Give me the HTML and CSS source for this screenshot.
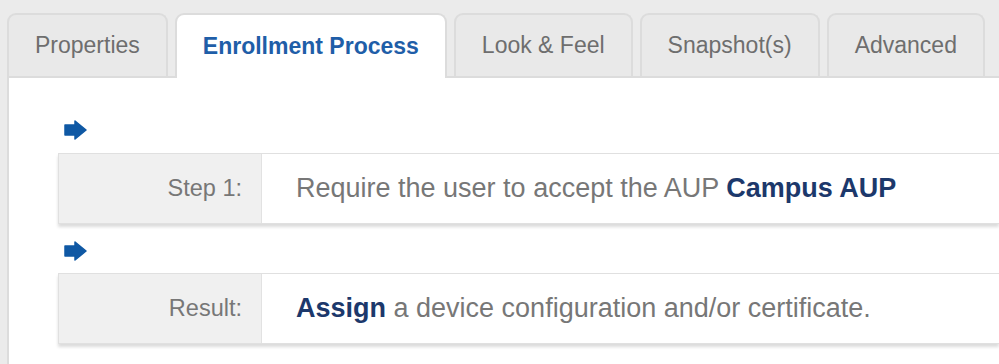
FILE: index.html
```html
<!DOCTYPE html>
<html>
<head>
  <meta charset="utf-8">
  <title>Enrollment Process</title>
  <link rel="stylesheet" href="styles.css">
</head>
<body>
  <div class="tabs">
    <div class="tab">Properties</div>
    <div class="tab active">Enrollment Process</div>
    <div class="tab">Look &amp; Feel</div>
    <div class="tab">Snapshot(s)</div>
    <div class="tab">Advanced</div>
  </div>

  <div class="panel">
    <div class="steps">
      <svg class="arrow" width="23" height="20" viewBox="0 0 23 20">
        <polygon points="1,5 11,5 11,1 22,10 11,19 11,15 1,15" />
      </svg>
      <div class="row">
        <div class="label">Step 1:</div>
        <div class="value">Require the user to accept the AUP <b>Campus AUP</b></div>
      </div>

      <svg class="arrow" width="23" height="20" viewBox="0 0 23 20">
        <polygon points="1,5 11,5 11,1 22,10 11,19 11,15 1,15" />
      </svg>
      <div class="row">
        <div class="label">Result:</div>
        <div class="value"><b>Assign</b> a device configuration and/or certificate.</div>
      </div>
    </div>
  </div>
</body>
</html>
```

FILE: styles.css
```css
body {
  margin: 0;
  padding: 0;
  font-family: 'Liberation Sans', Arial, Helvetica, sans-serif;
  background: #ebebeb;
  color: #777;
  height: 364px;
  overflow: hidden;
}

.tabs {
  display: flex;
  gap: 7px;
  padding: 13px 0 0 7px;
}

.tab {
  height: 61px;
  padding: 0 26px;
  display: flex;
  align-items: center;
  font-size: 23px;
  color: #6e6e6e;
  background: #e9e9e9;
  border: 2px solid #dcdcdc;
  border-bottom: none;
  border-radius: 9px 9px 0 0;
}

.tab.active {
  height: 63px;
  margin-bottom: -2px;
  background: #fff;
  color: #1f5ea8;
  font-weight: bold;
  position: relative;
  z-index: 1;
}

.panel {
  margin-left: 7px;
  height: 300px;
  background: #fff;
  border-left: 2px solid #dcdcdc;
  border-top: 2px solid #dcdcdc;
}

.steps {
  padding: 42px 0 0 49px;
}

.arrow {
  display: block;
  margin-left: 6px;
  fill: #0f58a4;
  stroke: #0f58a4;
  stroke-width: 1.5;
  stroke-linejoin: round;
}

.arrow:first-child {
  margin-bottom: 13px;
}

.row + .arrow {
  margin-top: 17px;
  margin-bottom: 12px;
}

.row {
  display: flex;
  height: 69px;
  border: 1px solid #e0e0e0;
  border-right: none;
  box-shadow: 0 3px 3px rgba(0, 0, 0, 0.14);
}

.label {
  width: 183px;
  padding-right: 19px;
  flex-shrink: 0;
  display: flex;
  align-items: center;
  justify-content: flex-end;
  background: #f0f0f0;
  border-right: 1px solid #e2e2e2;
  font-size: 23.5px;
  color: #777;
}

.value {
  display: flex;
  align-items: center;
  padding-left: 34px;
  font-size: 27px;
  color: #777;
  white-space: pre;
}

.value b {
  color: #1c386b;
}
```
